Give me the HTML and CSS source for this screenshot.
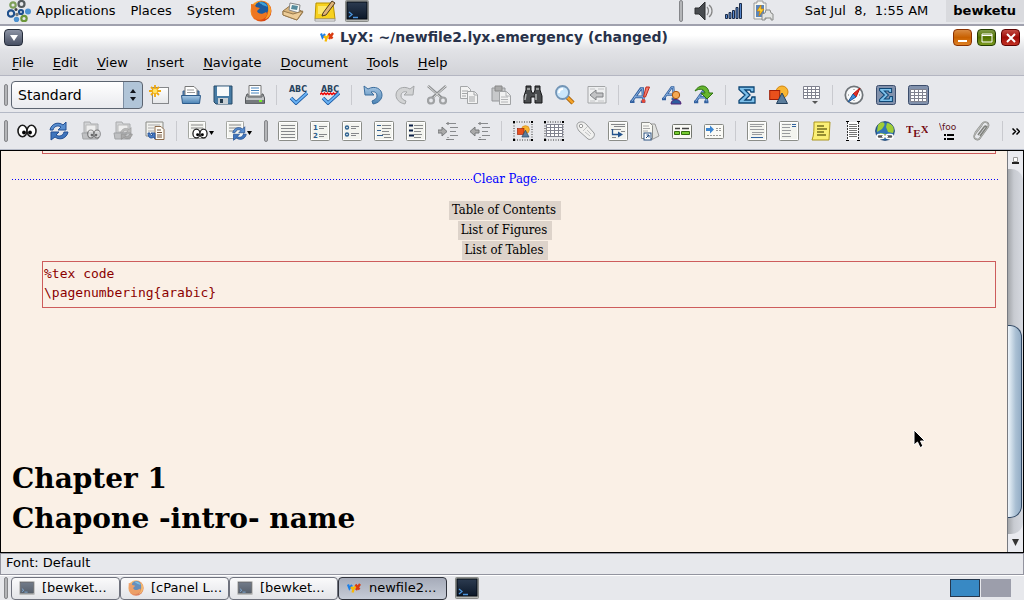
FILE: index.html
```html
<!DOCTYPE html>
<html lang="en">
<head>
<meta charset="utf-8">
<title>LyX: ~/newfile2.lyx.emergency (changed)</title>
<link rel="stylesheet" href="styles.css">
</head>
<body>
<svg class="defs" aria-hidden="true">
  <defs>
    <linearGradient id="gBlue" x2="0" y2="1"><stop stop-color="#a9c8e4"/><stop offset="1" stop-color="#4a83b5"/></linearGradient>
    <linearGradient id="gFox" x2="1" y2="1"><stop stop-color="#ffb52e"/><stop offset=".5" stop-color="#f0701a"/><stop offset="1" stop-color="#c8280c"/></linearGradient>
    <linearGradient id="gNight" x2="0" y2="1"><stop stop-color="#2c3b50"/><stop offset="1" stop-color="#0c1829"/></linearGradient>
    <linearGradient id="gPaper" x2="0" y2="1"><stop stop-color="#fff"/><stop offset="1" stop-color="#e6e7e9"/></linearGradient>
  </defs>
  <symbol id="page" viewBox="0 0 20 20"><rect x=".5" y=".5" width="19" height="19" rx="1" fill="#f3f4ef" stroke="#8b8d88"/><rect x="1.5" y="1.5" width="17" height="17" fill="none" stroke="#fff"/></symbol>
  <symbol id="lyx" viewBox="0 0 14 10"><path d="M1 1.500l1.500 4L5 2" fill="none" stroke="#1b7fe8" stroke-width="2.200"/><path d="M4 4l2 2 3-3M7 5L5.500 9.500" fill="none" stroke="#f8b800" stroke-width="2.300"/><path d="M8.500 1.500l4 5M13 1L9 7" fill="none" stroke="#d83a10" stroke-width="2.300"/></symbol>
  <symbol id="term" viewBox="0 0 24 22"><rect x=".5" y=".5" width="23" height="21" rx="1" fill="#b7b8b5" stroke="#8a8c89"/><rect x="2" y="2" width="20" height="17" fill="url(#gNight)" stroke="#050a12"/><path d="M4 12l3 2.500L4 17M8 17.500h5" fill="none" stroke="#4c95dc" stroke-width="1.300"/></symbol>
  <symbol id="fox" viewBox="0 0 22 22"><circle cx="11" cy="11" r="10.500" fill="url(#gFox)"/><circle cx="11.500" cy="8.500" r="7" fill="#1d5b9e"/><path d="M9 2c5 0 8 2 8.500 5-3-2-5-1-6-3-1 0-2-1-2.500-2z" fill="#3fa3d8"/><path d="M1 4c3 0 4 1 5 3l4 1-3 3c1 3 5 4 9 1 2 2 1 5-3 7-5 2-10-1-11-6-1-3-1-6-1-9z" fill="#ee7620"/><path d="M17 3c4 3 5 8 3 12-1 2-3 4-5 4 4-5 4-10 2-16z" fill="#f7a02a"/></symbol>
  <symbol id="eyes" viewBox="0 0 20 14"><g fill="#fff" stroke="#1c1c1c" stroke-width="1.600"><ellipse cx="5.500" cy="7" rx="4.500" ry="5.700"/><ellipse cx="14.500" cy="7" rx="4.500" ry="5.700"/></g><circle cx="7" cy="8.500" r="1.900"/><circle cx="13" cy="8.500" r="1.900"/></symbol>
  <symbol id="sync" viewBox="0 0 20 20"><path d="M1 9C2 3 9 0 14 4l3-3v8H9l3-3C9 4 5 5 4 9z" fill="#5a8fd0" stroke="#234f93"/><path d="M19 11c-1 6-8 9-13 5l-4 3v-8h8l-3 3c3 2 7 1 8-3z" fill="#3f75bd" stroke="#234f93"/></symbol>
  <symbol id="syncgray" viewBox="0 0 20 20"><path d="M1 9C2 3 9 0 14 4l3-3v8H9l3-3C9 4 5 5 4 9z" fill="#bbb" stroke="#999"/><path d="M19 11c-1 6-8 9-13 5l-4 3v-8h8l-3 3c3 2 7 1 8-3z" fill="#aaa" stroke="#8c8c8c"/></symbol>
  <symbol id="folder" viewBox="0 0 20 20"><path d="M3 1h6l1 2h7v9H3z" fill="#d2d3d5" stroke="#aaacae"/><path d="M5 4h10v7H5z" fill="#eee" stroke="#bbb"/><path d="M1 12h17l-1 6H2z" fill="#bfc0c2" stroke="#a2a4a6"/></symbol>
  <symbol id="sigma" viewBox="0 0 20 20"><path d="M2 2h15v5h-3l-1-2H8l5 5-5 5h6l1-3h3v6H2v-2.500L8 10 2 4.500z" fill="#7ec0ea" stroke="#0d4675" stroke-width="1.300"/></symbol>
  <symbol id="shapes" viewBox="0 0 20 20"><circle cx="13" cy="7" r="6" fill="#f8b632" stroke="#d4850c"/><rect x=".7" y="5.500" width="10" height="9" fill="#e8501c" stroke="#9c1c06"/><path d="M13 8l5.500 10.500H7.500z" fill="#5b7d9c" stroke="#223f5c"/></symbol>
  <symbol id="grid" viewBox="0 0 17 13"><path d="M.5.500h16v12H.500z" fill="#fff" stroke="#80828f"/><path d="M1 3.500h15M1 6.500h15M1 9.500h15M4.500 1v11M8.500 1v11M12.500 1v11" stroke="#80828f" fill="none"/></symbol>
  <symbol id="frame" viewBox="0 0 20 20"><rect x="1" y="1" width="18" height="18" fill="none" stroke="#333" stroke-dasharray="1 1.500"/><path d="M0 0h2v2H0zM18 0h2v2h-2zM0 18h2v2H0zM18 18h2v2h-2z"/></symbol>
  <symbol id="letterA" viewBox="0 0 20 20"><path d="M2 17L12 3h2l1 14M5 12h10M0 17.500h5M12 17.500h5" fill="none" stroke="#315f9f" stroke-width="3"/><path d="M2 17L12 3h2l1 14M5 12h10" fill="none" stroke="#8db5e2" stroke-width="1.100"/></symbol>
  <symbol id="check" viewBox="0 0 20 20"><path d="M3 13l5 5L19 8" fill="none" stroke="#1b5aa5" stroke-width="3.600"/><path d="M3 13l5 5L19 8" fill="none" stroke="#6cb4f5" stroke-width="1.800"/></symbol>
</svg>

<header class="panel">
  <svg class="foot" width="24" height="22" viewBox="0 0 24 22"><g fill="none" stroke-width="2.200"><circle cx="6" cy="5" r="2.700" stroke="#7d9f58"/><circle cx="14.500" cy="4" r="3" stroke="#555c5e"/><circle cx="4" cy="13.500" r="3.200" stroke="#20508c"/><circle cx="14" cy="12" r="2" stroke="#20508c"/><circle cx="17" cy="18.500" r="2.700" stroke="#6c973a"/></g><circle cx="21" cy="11.500" r="3" fill="#4c91d0"/><circle cx="9.500" cy="19.500" r="2.700" fill="#4c91d0"/><circle cx="9" cy="9.500" r="1.500" fill="#444"/><circle cx="10" cy="14.500" r="1.700" fill="#777"/></svg>
  <nav class="panel-menu" aria-label="Desktop"><button>Applications</button><button>Places</button><button>System</button></nav>
  <div class="launchers">
    <button aria-label="Firefox"><svg width="22" height="22"><use href="#fox"/></svg></button>
    <button aria-label="Mail"><svg width="22" height="20" viewBox="0 0 22 20"><path d="M1 10L9 4l12 7-6 8L1 14z" fill="#dab57c" stroke="#93754a"/><path d="M8 2l10 2-1 8-10-3z" fill="#f4f7f4" stroke="#888"/><path d="M10 4l6 1-1 4-6-1z" fill="#568b9c"/><path d="M1 10l10 3 10-3-6 9-14-5z" fill="#edcc97" stroke="#987a4d"/></svg></button>
    <button aria-label="Notes"><svg width="22" height="22" viewBox="0 0 22 22"><path d="M2 3h17l2 16H1z" fill="#f7d11e" stroke="#b99200"/><path d="M1 19h20v2H1z" fill="#fff" stroke="#999"/><path d="M4 6h9l-3 8H4z" fill="#fde86b"/><path d="M9 13L18 1l3 2-9 12-4 1z" fill="#dfb477" stroke="#4f3b1e"/></svg></button>
    <button aria-label="Terminal"><svg width="24" height="22"><use href="#term"/></svg></button>
  </div>
  <div class="tray">
    <i class="grip"></i>
    <svg width="20" height="20" viewBox="0 0 20 20"><path d="M1 7h4l6-6v18l-6-6H1z" fill="#484b4f" stroke="#2c2e30"/><path d="M13 6c2 2 2 6 0 8M15 4c4 3 4 9 0 12" fill="none" stroke="#888" stroke-width="1.300"/></svg>
    <svg width="17" height="16" viewBox="0 0 17 16"><g fill="#5686cc" stroke="#1c2c48"><path d="M.5 11.500h2v4h-2zM4 9.500h2v6H4zM7.500 7.500h2v8h-2zM11 4.500h2v11h-2zM14.500.5h2v15h-2z"/></g></svg>
    <svg width="21" height="22" viewBox="0 0 21 22"><path d="M1 3h3V1h6v2h3v16H1z" fill="#f5f5f0" stroke="#999"/><path d="M3 5h8v12H3z" fill="#5a85ba"/><path d="M8 5l-4 6h3l-1 5 5-7H8z" fill="#ffd52e" stroke="#d47f00" stroke-width=".7"/><path d="M9 20v-6l3-1 1-3h4l1 3 2 1v6h-2v-2h-6v2z" fill="#e2e3e2" stroke="#888a88"/></svg>
  </div>
  <time class="clock">Sat Jul&nbsp; 8,&nbsp; 1:55 AM</time>
  <button class="user">bewketu</button>
</header>

<div class="titlebar">
  <button class="winmenu" aria-label="Window menu"><svg width="8" height="6" viewBox="0 0 8 6"><path d="M0 0h8L4 6z" fill="#fff"/></svg></button>
  <h1><svg width="14" height="10"><use href="#lyx"/></svg>LyX: ~/newfile2.lyx.emergency (changed)</h1>
  <div class="winbtns">
    <button class="min" aria-label="Minimize"><svg width="10" height="10"><path d="M0 8h9" stroke="#fff" stroke-width="2"/></svg></button>
    <button class="max" aria-label="Maximize"><svg width="12" height="10"><path d="M1 1h10v8H1zM1 2.500h10" fill="none" stroke="#fff"/></svg></button>
    <button class="close" aria-label="Close"><svg width="10" height="10"><path d="M1 1l8 8M9 1L1 9" stroke="#fff" stroke-width="2"/></svg></button>
  </div>
</div>

<nav class="menubar" aria-label="Application"><button><u>F</u>ile</button><button><u>E</u>dit</button><button><u>V</u>iew</button><button><u>I</u>nsert</button><button><u>N</u>avigate</button><button><u>D</u>ocument</button><button><u>T</u>ools</button><button><u>H</u>elp</button></nav>

<div class="toolbar first">
  <i class="grip"></i>
  <div class="combo">
    <select aria-label="Paragraph style"><option>Standard</option></select>
    <svg width="6" height="12" viewBox="0 0 6 12"><path d="M0 4l3-4 3 4zM0 8h6l-3 4z" fill="#10151c"/></svg>
  </div>
  <button aria-label="New document"><svg width="20" height="20" viewBox="0 0 20 20"><rect x="3.500" y="2.500" width="16" height="16" fill="url(#gPaper)" stroke="#85878a"/><path d="M6 0v12M0 6h12M2 2l8 8M10 2l-8 8" stroke="#f0a80c" stroke-width="1.800"/><circle cx="6" cy="6" r="2.300" fill="#ffe468"/></svg></button>
  <button aria-label="Open document"><svg width="20" height="20" viewBox="0 0 20 20"><path d="M2 6h16v6H2z" fill="#5a88b8" stroke="#355f8d"/><path d="M4 1.500h9l3 3V12H4z" fill="#fff" stroke="#777"/><path d="M6 5h7M6 7.500h8" stroke="#999"/><path d="M.5 10.500h19l-1 8h-17z" fill="url(#gBlue)" stroke="#2d5b8b"/></svg></button>
  <button aria-label="Save document"><svg width="20" height="20" viewBox="0 0 20 20"><path d="M1 1h18v18H3l-2-2z" fill="#477ba4" stroke="#264b69"/><path d="M4 1.500h12V11H4z" fill="#f7f9fa"/><path d="M5 13h10v6H5z" fill="#c8cfd4"/><path d="M7 14h3v4H7z" fill="#243a4c"/></svg></button>
  <button aria-label="Print document"><svg width="20" height="20" viewBox="0 0 20 20"><path d="M4 .5h12V11H4z" fill="#fff" stroke="#777"/><path d="M6 3h8M6 5.500h8M6 8h8" stroke="#4783bd"/><path d="M3 9H2L.5 13v5.500h19V13L18 9h-1v3H3z" fill="#c3c5c7" stroke="#55585b"/><path d="M1 15h18v3.500H1z" fill="#75797d"/><path d="M14 16h3" stroke="#76f028" stroke-width="2"/></svg></button>
  <i class="sep"></i>
  <button aria-label="Check spelling"><svg width="20" height="20" viewBox="0 0 20 20"><text x="10" y="7" class="abc">ABC</text><use href="#check"/></svg></button>
  <button aria-label="Spellcheck continuously"><svg width="20" height="20" viewBox="0 0 20 20"><text x="10" y="7" class="abc">ABC</text><path d="M0 9.500l1.500-1.500L3 9.500l1.500-1.500L6 9.500l1.500-1.500L9 9.500l1.500-1.500L12 9.500l1.500-1.500L15 9.500l1.500-1.500L18 9.500" fill="none" stroke="#e00" stroke-width="1.500"/><use href="#check"/></svg></button>
  <i class="sep"></i>
  <button aria-label="Undo"><svg width="20" height="20" viewBox="0 0 20 20"><path d="M1 1l1 9h9L8 7c4-1 6 1 6 4 0 2-2 4-5 5l1 3c6-1 9-5 9-9 0-6-7-10-14-6z" fill="url(#gBlue)" stroke="#3b6d9d"/></svg></button>
  <button aria-label="Redo"><svg width="20" height="20" viewBox="0 0 20 20"><path d="M19 1l-1 9H9l3-3C8 6 6 8 6 11c0 2 2 4 5 5l-1 3c-6-1-9-5-9-9 0-6 7-10 14-6z" fill="#d2d3d4" stroke="#a4a6a8"/></svg></button>
  <button aria-label="Cut"><svg width="20" height="20" viewBox="0 0 20 20"><path d="M1 1l14 12M19 1L5 13" stroke="#8e9092" stroke-width="2.600"/><path d="M1 1l13 12M19 1L6 13" stroke="#dedede"/><circle cx="4" cy="15.500" r="3" fill="none" stroke="#a0a2a4" stroke-width="2.200"/><circle cx="16" cy="15.500" r="3" fill="none" stroke="#a0a2a4" stroke-width="2.200"/></svg></button>
  <button aria-label="Copy"><svg width="20" height="20" viewBox="0 0 20 20"><g fill="#f2f2f2" stroke="#a4a6a8"><path d="M1.500 1.500h7l3 3v9h-10z"/><path d="M3 6h6M3 8.500h6M3 11h4"/><path d="M8.500 6.500h7l3 3v9h-10z"/><path d="M15 7v3h3M10 12h6M10 14h6M10 16h6"/></g></svg></button>
  <button aria-label="Paste"><svg width="20" height="20" viewBox="0 0 20 20"><path d="M1 3h13v13H1z" fill="#c7c8ca" stroke="#95979a"/><path d="M4 1h7v5H4z" fill="#aaa" stroke="#888"/><path d="M8.500 6.500h7l4 4v9h-11z" fill="#f1f1f1" stroke="#a1a3a5"/><path d="M15 7v4h4M10 12h7M10 14.500h7M10 17h7" fill="none" stroke="#b3b4b6"/></svg></button>
  <button aria-label="Find and replace"><svg width="20" height="20" viewBox="0 0 20 20"><path d="M3 1h5v4l1 3h2l1-3V1h5v4l2 6v7h-7v-6H8v6H1v-7l2-6z" fill="#4a4c4e" stroke="#161718"/><path d="M4 4h3M13 4h3M3 9l-1 6M13 9v6" stroke="#b0b2b3" stroke-width="1.500"/></svg></button>
  <button aria-label="Advanced find"><svg width="20" height="20" viewBox="0 0 20 20"><path d="M12 12l6 6" stroke="#a56008" stroke-width="4.500"/><path d="M12 12l6 6" stroke="#f3a32a" stroke-width="2.500"/><circle cx="7.500" cy="7.500" r="6.500" fill="#cbe6fa" stroke="#7395b6" stroke-width="1.800"/><path d="M4 8c0-3 2-4 4-4" fill="none" stroke="#fff" stroke-width="2"/></svg></button>
  <button aria-label="Navigate back"><svg width="20" height="20" viewBox="0 0 20 20"><path d="M1 1.500h17l1 1V18H1z" fill="#eeeff0" stroke="#a3a5a7"/><path d="M3 4h5M11 4h6M3 16h5M11 16h6" stroke="#c3c4c6"/><path d="M3 10l6-5v3h7v4H9v3z" fill="#c2c3c5" stroke="#808285"/></svg></button>
  <i class="sep"></i>
  <button aria-label="Toggle emphasis"><svg width="20" height="20" viewBox="0 0 20 20"><use href="#letterA" y="1" width="18" height="18"/><path d="M16 2h3.500l-4 10h-2z" fill="#f37d6c" stroke="#c0281c"/><circle cx="13.500" cy="16" r="2" fill="#e44838"/></svg></button>
  <button aria-label="Toggle noun"><svg width="20" height="20" viewBox="0 0 20 20"><use href="#letterA" width="16" height="16"/><path d="M9 19c0-6 10-6 10 0z" fill="#2e5d9e" stroke="#542477"/><circle cx="14" cy="10" r="3.700" fill="#f5a953" stroke="#a9540c"/></svg></button>
  <button aria-label="Apply last"><svg width="20" height="20" viewBox="0 0 20 20"><use href="#letterA" y="2" width="17" height="17"/><path d="M1 6c4-7 13-7 14 2h4l-6 6-6-6h4c-1-4-5-5-10-2z" fill="#66b52e" stroke="#2e7410"/></svg></button>
  <i class="sep"></i>
  <button aria-label="Insert math"><svg width="20" height="20"><use href="#sigma"/></svg></button>
  <button aria-label="Insert graphics"><svg width="20" height="20"><use href="#shapes"/></svg></button>
  <button aria-label="Insert table"><svg width="17" height="19" viewBox="0 0 17 19"><use href="#grid" width="17" height="13"/><path d="M9 15h6l-3 3z" fill="#555"/></svg></button>
  <i class="sep"></i>
  <button aria-label="Toggle outline"><svg width="20" height="20" viewBox="0 0 20 20"><circle cx="10" cy="10" r="8.700" fill="#f8f9fa" stroke="#6f7479" stroke-width="1.700"/><path d="M4 10h1M15 10h1M10 4v1M10 15v1" stroke="#777"/><path d="M16 3l-4 9-3-3z" fill="#e03028" stroke="#b3140c"/><path d="M4 17l5-8 3 3z" fill="#408dd8" stroke="#1c5698"/></svg></button>
  <button class="toggle" aria-label="Toggle math toolbar"><svg width="20" height="20"><rect x=".5" y=".5" width="19" height="19" rx="2" fill="#8191ac" stroke="#3c4d6c"/><use href="#sigma" x="2" y="2" width="16" height="16"/></svg></button>
  <button class="toggle" aria-label="Toggle table toolbar"><svg width="21" height="20"><rect x=".5" y=".5" width="20" height="19" rx="2" fill="#8191ac" stroke="#3c4d6c"/><use href="#grid" x="2" y="4" width="17" height="13"/></svg></button>
</div>

<div class="toolbar second">
  <i class="grip"></i>
  <button aria-label="View"><svg width="20" height="14"><use href="#eyes"/></svg></button>
  <button aria-label="Update"><svg width="20" height="20"><use href="#sync"/></svg></button>
  <button aria-label="View master document"><svg width="20" height="20"><use href="#folder"/><use href="#eyes" x="6" y="8" width="14" height="10" opacity=".45"/></svg></button>
  <button aria-label="Update master document"><svg width="20" height="20"><use href="#folder"/><use href="#syncgray" x="7" y="6" width="13" height="13"/></svg></button>
  <button aria-label="Enable synchronization"><svg width="20" height="20" viewBox="0 0 20 20"><path d="M1 1h17v14H1z" fill="#f2f2ee" stroke="#8a8c87"/><path d="M3 4h12M3 7h6M3 10h6" stroke="#aaa"/><path d="M10 5.500h6l3 3v10h-9z" fill="#fffdf6" stroke="#8f6c4c"/><path d="M12 9h4M12 11.500h5M12 14h5M12 16h5" stroke="#71513a"/><path d="M3 12c0 5 3 6 6 4l1 2v-6H6l2 2c-2 1-3 0-3-2z" fill="#487dc5" stroke="#2a559b"/></svg></button>
  <i class="sep"></i>
  <button class="wide" aria-label="View other formats"><svg width="26" height="20" viewBox="0 0 26 20"><use href="#page" width="18" height="18"/><path d="M3 4h12M3 7h12" stroke="#888"/><use href="#eyes" x="4" y="7" width="16" height="11"/><path d="M21 10h5l-2.500 4z"/></svg></button>
  <button class="wide" aria-label="Update other formats"><svg width="26" height="20" viewBox="0 0 26 20"><use href="#page" width="18" height="18"/><path d="M3 4h12M3 7h12M3 10h8" stroke="#888"/><use href="#sync" x="6" y="5" width="15" height="15"/><path d="M21 10h5l-2.500 4z"/></svg></button>
  <i class="grip inner"></i>
  <button aria-label="Default layout"><svg width="20" height="20"><use href="#page"/><path d="M3 4.500h14M3 7.500h14M3 10.500h14M3 13.500h14M3 16.500h14" stroke="#85878a"/></svg></button>
  <button aria-label="Numbered list"><svg width="20" height="20"><use href="#page"/><text x="3" y="9" class="num">1</text><text x="3" y="17" class="num">2</text><path d="M9 5.500h8M9 7.500h5M9 13.500h8M9 15.500h5" stroke="#85878a"/></svg></button>
  <button aria-label="Itemized list"><svg width="20" height="20"><use href="#page"/><circle cx="5" cy="6.500" r="1.500" fill="#fff" stroke="#2e6291" stroke-width="1.400"/><circle cx="5" cy="13.500" r="1.500" fill="#fff" stroke="#2e6291" stroke-width="1.400"/><path d="M9 5.500h8M9 7.500h5M9 12.500h8M9 14.500h5" stroke="#85878a"/></svg></button>
  <button aria-label="List"><svg width="20" height="20"><use href="#page"/><path d="M8 4.500h9M8 7.500h9M8 10.500h7M8 13.500h8M10 16.500h7" stroke="#85878a"/><path d="M3 4.500h4M3 9.500h4M3 14.500h6" stroke="#315e91"/></svg></button>
  <button aria-label="Description"><svg width="20" height="20"><use href="#page"/><path d="M8 4.500h9M8 7.500h9M8 10.500h7M8 13.500h8M8 16.500h7" stroke="#85878a"/><path d="M3 4.500h4M3 9.500h4M3 14.500h5" stroke="#0b1f46" stroke-width="2"/></svg></button>
  <button aria-label="Increase depth"><svg width="20" height="20"><path d="M8 2.500h10M12 6.500h8M12 10.500h6M12 14.500h8M8 18.500h8" stroke="#888a8d"/><path d="M10 1v4M10 16v4" stroke="#666" stroke-dasharray="1 1"/><path d="M0 9h4V6l5 4.500L4 15v-3H0z" fill="#aaa" stroke="#77797b"/></svg></button>
  <button aria-label="Decrease depth"><svg width="20" height="20"><path d="M8 2.500h10M12 6.500h8M12 10.500h6M12 14.500h8M8 18.500h8" stroke="#888a8d"/><path d="M10 1v4M10 16v4" stroke="#666" stroke-dasharray="1 1"/><path d="M9 9H5V6l-5 4.500L5 15v-3h4z" fill="#aaa" stroke="#77797b"/></svg></button>
  <i class="sep"></i>
  <button aria-label="Insert figure float"><svg width="20" height="20"><use href="#frame"/><use href="#shapes" x="4" y="4" width="13" height="13"/></svg></button>
  <button aria-label="Insert table float"><svg width="20" height="20"><use href="#frame"/><use href="#grid" x="2" y="3" width="17" height="13"/></svg></button>
  <button aria-label="Insert label"><svg width="20" height="20"><path d="M2 2c3-2 6-1 8 1l8 9c2 3-3 8-6 6L3 10C1 7 0 4 2 2z" fill="#f0f0ef" stroke="#999b9c"/><circle cx="5" cy="5" r="1.700" fill="#fff" stroke="#999"/><path d="M7 10l5-5M9 11l5 4M11 9l4 4" stroke="#c0c1c2"/></svg></button>
  <button aria-label="Insert cross-reference"><svg width="20" height="20"><use href="#page"/><path d="M3 3.500h14M6 5.500h11M3 8.500h10M13 10.500h4M4 16.500h4" stroke="#85878a"/><path d="M4.500 8v5.500H11" fill="none" stroke="#24538c" stroke-width="1.300"/><path d="M10 10.500l5 3-5 3z" fill="#24538c"/></svg></button>
  <button aria-label="Insert citation"><svg width="20" height="20"><path d="M8 3h7l4 12-8 4z" fill="#e1e2df" stroke="#999"/><path d="M1.500 1.500h8l3 3v13h-11z" fill="#f8f8f3" stroke="#8d8e8b"/><path d="M3 5h6M3 7.500h7M3 10h5" stroke="#aaa"/><rect x="4" y="12" width="7" height="7" fill="#fff" stroke="#2c5282"/><path d="M6 17l3-3M6.500 14H9v2.500" fill="none" stroke="#17457e"/></svg></button>
  <button aria-label="Insert index entry"><svg width="20" height="20"><rect x=".5" y="3.500" width="19" height="14" rx="1" fill="#fafaf6" stroke="#747771"/><path d="M3 7.500h5M10 7.500h7" stroke="#444" stroke-width="1.500"/><path d="M2.500 10.500h5v3h-5zM9.500 10.500h8v3h-8z" fill="#76cc31" stroke="#346c0d"/></svg></button>
  <button aria-label="Insert nomenclature"><svg width="20" height="20"><rect x=".5" y="3.500" width="19" height="14" rx="1" fill="#fafaf6" stroke="#878984"/><path d="M2 7h4V4.500l4 4-4 4V10H2z" fill="#3b85d1"/><path d="M12 7.500h5M12 9.500h5M3 14.500h14" stroke="#999" stroke-dasharray="2 1"/></svg></button>
  <i class="sep"></i>
  <button aria-label="Insert footnote"><svg width="20" height="20"><use href="#page"/><path d="M3 3.500h14M3 5.500h12M3 8.500h14M5 11.500h12M5 13.500h10" stroke="#999b9e"/><path d="M4 16.500h12" stroke="#31639f"/></svg></button>
  <button aria-label="Insert margin note"><svg width="20" height="20"><use href="#page"/><path d="M3 3.500h9M3 6.500h8M3 9.500h9M3 12.500h8M3 15.500h9" stroke="#999b9e"/><path d="M13 3.500h4M13 5.500h4" stroke="#31639f"/></svg></button>
  <button aria-label="Insert note"><svg width="20" height="20"><path d="M3 1h16l-1 18H1c2-5 2-11 2-18z" fill="#fbef75" stroke="#ac9620"/><path d="M6 5h7M6 8h10M6 11h7M6 14h9" stroke="#746e1c" stroke-width="1.300"/></svg></button>
  <button aria-label="Insert box"><svg width="14" height="20"><path d="M2 1h10v18H2z" fill="#fff"/><path d="M0 .5h3M11 .5h3M0 19.500h3M11 19.500h3" stroke="#000"/><path d="M1.500 1v18M12.500 1v18" stroke="#333" stroke-dasharray="2 1"/><path d="M3 3.500h8M3 5.500h8M3 7.500h8M3 9.500h8M3 11.500h8M3 13.500h8M3 15.500h8" stroke="#777"/></svg></button>
  <button aria-label="Insert hyperlink"><svg width="20" height="20"><circle cx="10" cy="10" r="9.300" fill="#3274b5" stroke="#173e6c"/><path d="M3 4c4-5 8-2 6 1l-2 3-5 3zM12 2c6 1 8 5 6 10l-5-1-2-5zM5 12l6 1-2 5-4-3z" fill="#a1ce37"/><g fill="none" stroke="#555" stroke-width="3"><path d="M2 15.500h16"/></g><g fill="none" stroke="#fff" stroke-width="1.500"><rect x="2" y="13.500" width="7" height="4" rx="2"/><rect x="11" y="13.500" width="7" height="4" rx="2"/><path d="M7 15.500h6"/></g></svg></button>
  <button aria-label="Insert TeX code"><svg width="22" height="20"><text y="12" class="tex">T<tspan dy="4">E</tspan><tspan dy="-4">X</tspan></text></svg></button>
  <button aria-label="Insert math macro"><svg width="20" height="20"><text x="0" y="9" class="foo">\foo</text><path d="M5 13h2v2H5zM5 17h2v2H5zM8 13h7v2H8zM8 17h7v2H8z"/></svg></button>
  <button aria-label="Include file"><svg width="20" height="20"><path d="M4 12L11 3c3-4 8-1 6 3l-8 11c-2 3-8 1-5-4l7-9M7 14l6-8c2-2 3 0 2 1L9 15" fill="none" stroke="#7f817d" stroke-width="1.600"/><path d="M4 12L11 3c3-4 8-1 6 3l-8 11c-2 3-8 1-5-4l7-9" fill="none" stroke="#d8d9d6" stroke-width=".6"/></svg></button>
  <i class="sep"></i>
  <button class="more" aria-label="More tools"><svg width="8" height="7"><path d="M.5.5l3 3-3 3M4.500.5l3 3-3 3" fill="none" stroke="#000" stroke-width="1.500"/></svg></button>
</div>

<main class="editor">
  <article class="document">
    <div class="inset clipped"></div>
    <div class="pagebreak">Clear Page</div>
    <div class="lists"><button>Table of Contents</button><button>List of Figures</button><button>List of Tables</button></div>
    <div class="inset code">%tex code<br>\pagenumbering{arabic}</div>
    <h2>Chapter 1<br>Chapone -intro- name</h2>
  </article>
  <div class="scrollbar">
    <button aria-label="Scroll up"><svg width="7" height="7"><path d="M1.500.5h4v4h-4z" fill="#fff" stroke="#999"/><path d="M0 6h7" stroke="#222" stroke-width="2"/></svg></button>
    <div class="track"><div class="thumb"></div></div>
    <button aria-label="Scroll down"><svg width="7" height="8"><path d="M0 0h7L3.500 7z" fill="#333"/></svg></button>
  </div>
</main>

<div class="status">Font: Default</div>

<footer class="taskbar">
  <i class="grip"></i>
  <div class="tasks">
    <button><svg class="dim" width="16" height="14"><use href="#term"/></svg><span>[bewket...</span></button>
    <button><svg class="dim" width="16" height="16"><use href="#fox"/></svg><span>[cPanel L...</span></button>
    <button><svg class="dim" width="16" height="14"><use href="#term"/></svg><span>[bewket...</span></button>
    <button class="active"><svg width="16" height="10"><use href="#lyx"/></svg><span>newfile2...</span></button>
  </div>
  <button class="launch" aria-label="Terminal"><svg width="24" height="22"><use href="#term"/></svg></button>
  <div class="pager"><button class="current" aria-label="Workspace 1"></button><button aria-label="Workspace 2"></button></div>
</footer>

<svg class="cursor" width="13" height="20" viewBox="0 0 13 20"><path d="M1 1v15l3.500-3 2.500 5.500 3-1.200L7.500 12H12z" fill="#000" stroke="#fff"/></svg>
</body>
</html>
```

FILE: styles.css
```css
* { box-sizing: border-box; }

body {
  margin: 0;
  height: 100vh;
  display: flex;
  flex-direction: column;
  overflow: hidden;
  background: #e7e8ec;
  color: #000;
  font: 13px/16px "DejaVu Sans", sans-serif;
}

button {
  margin: 0;
  padding: 0;
  border: 0;
  background: none;
  color: inherit;
  font: inherit;
}

svg { display: block; flex: none; }
.defs { position: absolute; width: 0; height: 0; }

.grip {
  flex: none;
  width: 4px;
  height: 22px;
  border: 1px solid #85868a;
  border-radius: 2px;
  background: #b4b5b8;
}

/* Desktop panel */
.panel {
  flex: none;
  height: 26px;
  display: flex;
  align-items: center;
  padding: 0 0 2px 7px;
  border-bottom: 2px solid #a0a1ae;
}
.panel-menu { display: flex; gap: 15px; margin-left: 5px; }
.launchers { display: flex; margin-left: 10px; }
.launchers button { width: 32px; display: grid; place-items: center; }
.tray { display: flex; align-items: center; gap: 11px; margin-left: auto; }
.clock { margin: 0 18px 0 31px; }
.user {
  align-self: stretch;
  padding: 0 8px 0 7px;
  background: #d9dade;
  font-weight: bold;
}

/* Window title */
.titlebar {
  flex: none;
  height: 23px;
  display: flex;
  align-items: center;
  padding: 0 4px;
  background: linear-gradient(#fff 40%, #e3e4e7);
}
.titlebar button {
  width: 19px;
  height: 17px;
  display: grid;
  place-items: center;
  border: 1px solid #252c3a;
  border-radius: 4px;
}
.titlebar h1 {
  flex: 1;
  display: flex;
  justify-content: center;
  align-items: center;
  gap: 6px;
  margin: 0;
  padding: 0 0 2px 12px;
  color: #28324a;
  font-size: 14px;
}
.winmenu { background: linear-gradient(#8d94a5, #474f62); }
.winbtns { display: flex; gap: 5px; }
.titlebar .min { border-color: #8a3000; background: linear-gradient(#d98a42, #c86000 50%, #df8124); }
.titlebar .max { border-color: #243c00; background: linear-gradient(#7f9a48, #527200 50%, #7c9a20); }
.titlebar .close { border-color: #5e0000; background: linear-gradient(#c24a42, #a00c08 50%, #c33224); }

.menubar {
  flex: none;
  height: 27px;
  display: flex;
  align-items: center;
  gap: 19px;
  padding: 2px 0 0 12px;
  border-bottom: 1px solid #b4b6c2;
  background: linear-gradient(#e2e3e7, #d2d3d8);
}
.menubar u { text-underline-offset: 2px; text-decoration-thickness: 1px; }

/* Toolbars */
.toolbar {
  flex: none;
  height: 37px;
  display: flex;
  align-items: center;
  padding-left: 4px;
  border-bottom: 1px solid #b4b9c6;
}
.toolbar.first { padding-top: 2px; }
.toolbar .grip { margin-right: 3px; }
.toolbar .grip.inner { margin: 0 4px 0 6px; }
.toolbar button { width: 32px; height: 32px; display: grid; place-items: center; }
.toolbar .wide { width: 38px; }
.toolbar .more { width: 16px; }
.toolbar .sep { width: 1px; height: 20px; margin: 0 5px; background: #c9cacf; }

.combo { display: grid; width: 132px; align-items: center; }
.combo > * { grid-area: 1 / 1; }
.combo select {
  appearance: none;
  width: 100%;
  height: 28px;
  padding: 0 24px 0 6px;
  border: 1px solid #5c6470;
  border-radius: 4px;
  background: linear-gradient(90deg, transparent 111px, #7d8ea2 111px, #7d8ea2 112px, #b1c5d8 112px), linear-gradient(#fff, #e9eaee);
  color: #000;
  font: 14px "DejaVu Sans", sans-serif;
}
.combo svg { justify-self: end; margin-right: 7px; pointer-events: none; }

.abc { font: bold 8px "DejaVu Sans", sans-serif; fill: #28435e; text-anchor: middle; }
.num { font: bold 7px "DejaVu Sans", sans-serif; fill: #2c5d8c; }
.tex { font: bold 11px "Liberation Serif", serif; fill: #750b13; }
.foo { font: 9px "DejaVu Sans", sans-serif; fill: #5c1018; }

/* Document area */
.editor {
  flex: 1;
  min-height: 0;
  display: flex;
  border: 1px solid #000;
  background: #faf0e6;
}
.document {
  flex: 1;
  padding: 0 9px 0 11px;
  overflow: hidden;
  font: 13px/18px "DejaVu Serif Condensed", "DejaVu Serif", serif;
}
.inset { margin: 0 2px 0 30px; border: 1px solid #cd5c5c; }
.clipped { height: 3px; border-top: 0; }
.pagebreak {
  display: flex;
  align-items: center;
  gap: 1px;
  margin-top: 16px;
  color: #00f;
}
.pagebreak::before,
.pagebreak::after {
  content: "";
  flex: 1;
  height: 1px;
  background: repeating-linear-gradient(90deg, #00f 0 1px, transparent 1px 3px);
}
.lists { display: flex; flex-direction: column; align-items: center; gap: 1px; margin: 13px 0 1px; }
.lists button { padding: 0 5px 1px 3px; background: #ddd3ca; }
.code {
  padding: 2px 1px 5px;
  color: #8b0000;
  font: 13px/19px "DejaVu Sans Mono", monospace;
}
.document h2 { margin: 151px 0 0; font: bold 28px/40px "DejaVu Serif", serif; }

.scrollbar {
  width: 16px;
  display: flex;
  flex-direction: column;
  border-left: 1px solid #777a80;
  background: #e9eaef;
}
.scrollbar button { height: 18px; display: grid; place-items: center; }
.track {
  flex: 1;
  padding: 156px 1px 16px 0;
  border-radius: 0 12px 12px 0;
  background: linear-gradient(90deg, #a3a6aa, #c8cbd1 40%, #d6d9e0);
}
.thumb {
  height: 100%;
  border: 1px solid #304864;
  border-left: 0;
  border-radius: 0 12px 12px 0;
  background: linear-gradient(90deg, #edf4fa, #a9bfd3 60%, #94adc6);
}

.status {
  flex: none;
  height: 22px;
  padding: 1px 5px;
  border: 1px solid #93949f;
}

/* Taskbar */
.taskbar {
  flex: none;
  height: 25px;
  display: flex;
  align-items: center;
  padding: 0 13px 0 4px;
  border-top: 1px solid #fff;
}
.tasks { display: flex; margin-left: 3px; }
.tasks button {
  width: 109px;
  height: 23px;
  display: flex;
  align-items: center;
  gap: 7px;
  padding-left: 7px;
  border: 1px solid #6f727d;
  border-radius: 4px;
  background: linear-gradient(#fafafb, #e3e4e8);
}
.tasks .active { border-color: #30333c; background: linear-gradient(#a6abb9, #c6ccd7); }
.dim { opacity: .65; }
.launch { margin-left: 8px; }
.pager { display: flex; gap: 1px; margin-left: auto; }
.pager button { width: 30px; height: 18px; background: #9c9eab; }
.pager .current { border: 1px solid #fff; background: #3889c4; outline: 1px solid #26374d; outline-offset: -1px; }

.cursor { position: absolute; left: 913px; top: 429px; pointer-events: none; }
```
